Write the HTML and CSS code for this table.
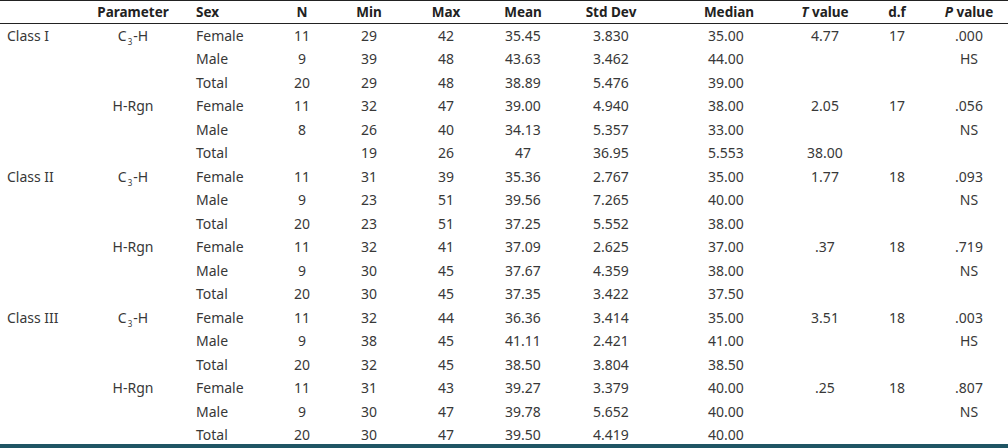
FILE: index.html
```html
<!DOCTYPE html>
<html>
<head>
<meta charset="utf-8">
<link rel="stylesheet" href="styles.css">
</head>
<body>
<table class="stats">
<colgroup>
<col class="c-class"><col class="c-param"><col class="c-sex"><col class="c-n"><col class="c-min"><col class="c-max"><col class="c-mean"><col class="c-sd"><col class="c-med"><col class="c-t"><col class="c-df"><col class="c-p">
</colgroup>
<thead>
<tr><th></th><th>Parameter</th><th class="l">Sex</th><th>N</th><th>Min</th><th>Max</th><th>Mean</th><th>Std Dev</th><th>Median</th><th><i>T</i> value</th><th>d.f</th><th><i>P</i> value</th></tr>
</thead>
<tbody>
<tr><td class="l">Class I</td><td>C<sub>3</sub>-H</td><td class="l">Female</td><td>11</td><td>29</td><td>42</td><td>35.45</td><td>3.830</td><td class="med">35.00</td><td>4.77</td><td>17</td><td>.000</td></tr>
<tr><td></td><td></td><td class="l">Male</td><td>9</td><td>39</td><td>48</td><td>43.63</td><td>3.462</td><td class="med">44.00</td><td></td><td></td><td>HS</td></tr>
<tr><td></td><td></td><td class="l">Total</td><td>20</td><td>29</td><td>48</td><td>38.89</td><td>5.476</td><td class="med">39.00</td><td></td><td></td><td></td></tr>
<tr><td></td><td>H-Rgn</td><td class="l">Female</td><td>11</td><td>32</td><td>47</td><td>39.00</td><td>4.940</td><td class="med">38.00</td><td>2.05</td><td>17</td><td>.056</td></tr>
<tr><td></td><td></td><td class="l">Male</td><td>8</td><td>26</td><td>40</td><td>34.13</td><td>5.357</td><td class="med">33.00</td><td></td><td></td><td>NS</td></tr>
<tr><td></td><td></td><td class="l">Total</td><td></td><td>19</td><td>26</td><td>47</td><td>36.95</td><td class="med">5.553</td><td>38.00</td><td></td><td></td></tr>
<tr><td class="l">Class II</td><td>C<sub>3</sub>-H</td><td class="l">Female</td><td>11</td><td>31</td><td>39</td><td>35.36</td><td>2.767</td><td class="med">35.00</td><td>1.77</td><td>18</td><td>.093</td></tr>
<tr><td></td><td></td><td class="l">Male</td><td>9</td><td>23</td><td>51</td><td>39.56</td><td>7.265</td><td class="med">40.00</td><td></td><td></td><td>NS</td></tr>
<tr><td></td><td></td><td class="l">Total</td><td>20</td><td>23</td><td>51</td><td>37.25</td><td>5.552</td><td class="med">38.00</td><td></td><td></td><td></td></tr>
<tr><td></td><td>H-Rgn</td><td class="l">Female</td><td>11</td><td>32</td><td>41</td><td>37.09</td><td>2.625</td><td class="med">37.00</td><td>.37</td><td>18</td><td>.719</td></tr>
<tr><td></td><td></td><td class="l">Male</td><td>9</td><td>30</td><td>45</td><td>37.67</td><td>4.359</td><td class="med">38.00</td><td></td><td></td><td>NS</td></tr>
<tr><td></td><td></td><td class="l">Total</td><td>20</td><td>30</td><td>45</td><td>37.35</td><td>3.422</td><td class="med">37.50</td><td></td><td></td><td></td></tr>
<tr><td class="l">Class III</td><td>C<sub>3</sub>-H</td><td class="l">Female</td><td>11</td><td>32</td><td>44</td><td>36.36</td><td>3.414</td><td class="med">35.00</td><td>3.51</td><td>18</td><td>.003</td></tr>
<tr><td></td><td></td><td class="l">Male</td><td>9</td><td>38</td><td>45</td><td>41.11</td><td>2.421</td><td class="med">41.00</td><td></td><td></td><td>HS</td></tr>
<tr><td></td><td></td><td class="l">Total</td><td>20</td><td>32</td><td>45</td><td>38.50</td><td>3.804</td><td class="med">38.50</td><td></td><td></td><td></td></tr>
<tr><td></td><td>H-Rgn</td><td class="l">Female</td><td>11</td><td>31</td><td>43</td><td>39.27</td><td>3.379</td><td class="med">40.00</td><td>.25</td><td>18</td><td>.807</td></tr>
<tr><td></td><td></td><td class="l">Male</td><td>9</td><td>30</td><td>47</td><td>39.78</td><td>5.652</td><td class="med">40.00</td><td></td><td></td><td>NS</td></tr>
<tr><td></td><td></td><td class="l">Total</td><td>20</td><td>30</td><td>47</td><td>39.50</td><td>4.419</td><td class="med">40.00</td><td></td><td></td><td></td></tr>
</tbody>
</table>
</body>
</html>
```
FILE: styles.css
```css
html, body {
  margin: 0;
  padding: 0;
  background: #fff;
}
body {
  font-family: "Noto Sans", "Open Sans", sans-serif;
  font-size: 14px;
  color: #383838;
  overflow: hidden;
}
.stats {
  width: 1008px;
  table-layout: fixed;
  border-collapse: collapse;
  border-top: 1px solid #222;
  border-bottom: 4px solid #1f5564;
}
.c-class { width: 90px; }
.c-param { width: 86px; }
.c-sex { width: 86px; }
.c-n { width: 80px; }
.c-min { width: 54px; }
.c-max { width: 100px; }
.c-mean { width: 54px; }
.c-sd { width: 122px; }
.c-med { width: 114px; }
.c-t { width: 78px; }
.c-df { width: 66px; }
.c-p { width: 78px; }
.stats thead th {
  height: 22px;
  padding: 0;
  font-weight: bold;
  font-size: 13.5px;
  line-height: 16px;
  text-align: center;
  color: #222;
  border-bottom: 1px solid #222;
  white-space: nowrap;
}
.stats th.l { text-align: left; padding-left: 20px; }
.stats tbody td {
  height: 20px;
  padding: 3.5px 0 0 0;
  vertical-align: top;
  text-align: center;
  white-space: nowrap;
  line-height: 16px;
}
.stats tbody tr:last-child td {
  height: 17px;
}
.stats td.l { text-align: left; }
.stats td:first-child { padding-left: 7px; }
.stats td:nth-child(3) { padding-left: 20px; }
.stats td.med { text-align: left; padding-left: 36px; }
sub {
  font-size: 8px;
  line-height: 0;
  vertical-align: -4px;
  margin: 0 1px;
}
```
